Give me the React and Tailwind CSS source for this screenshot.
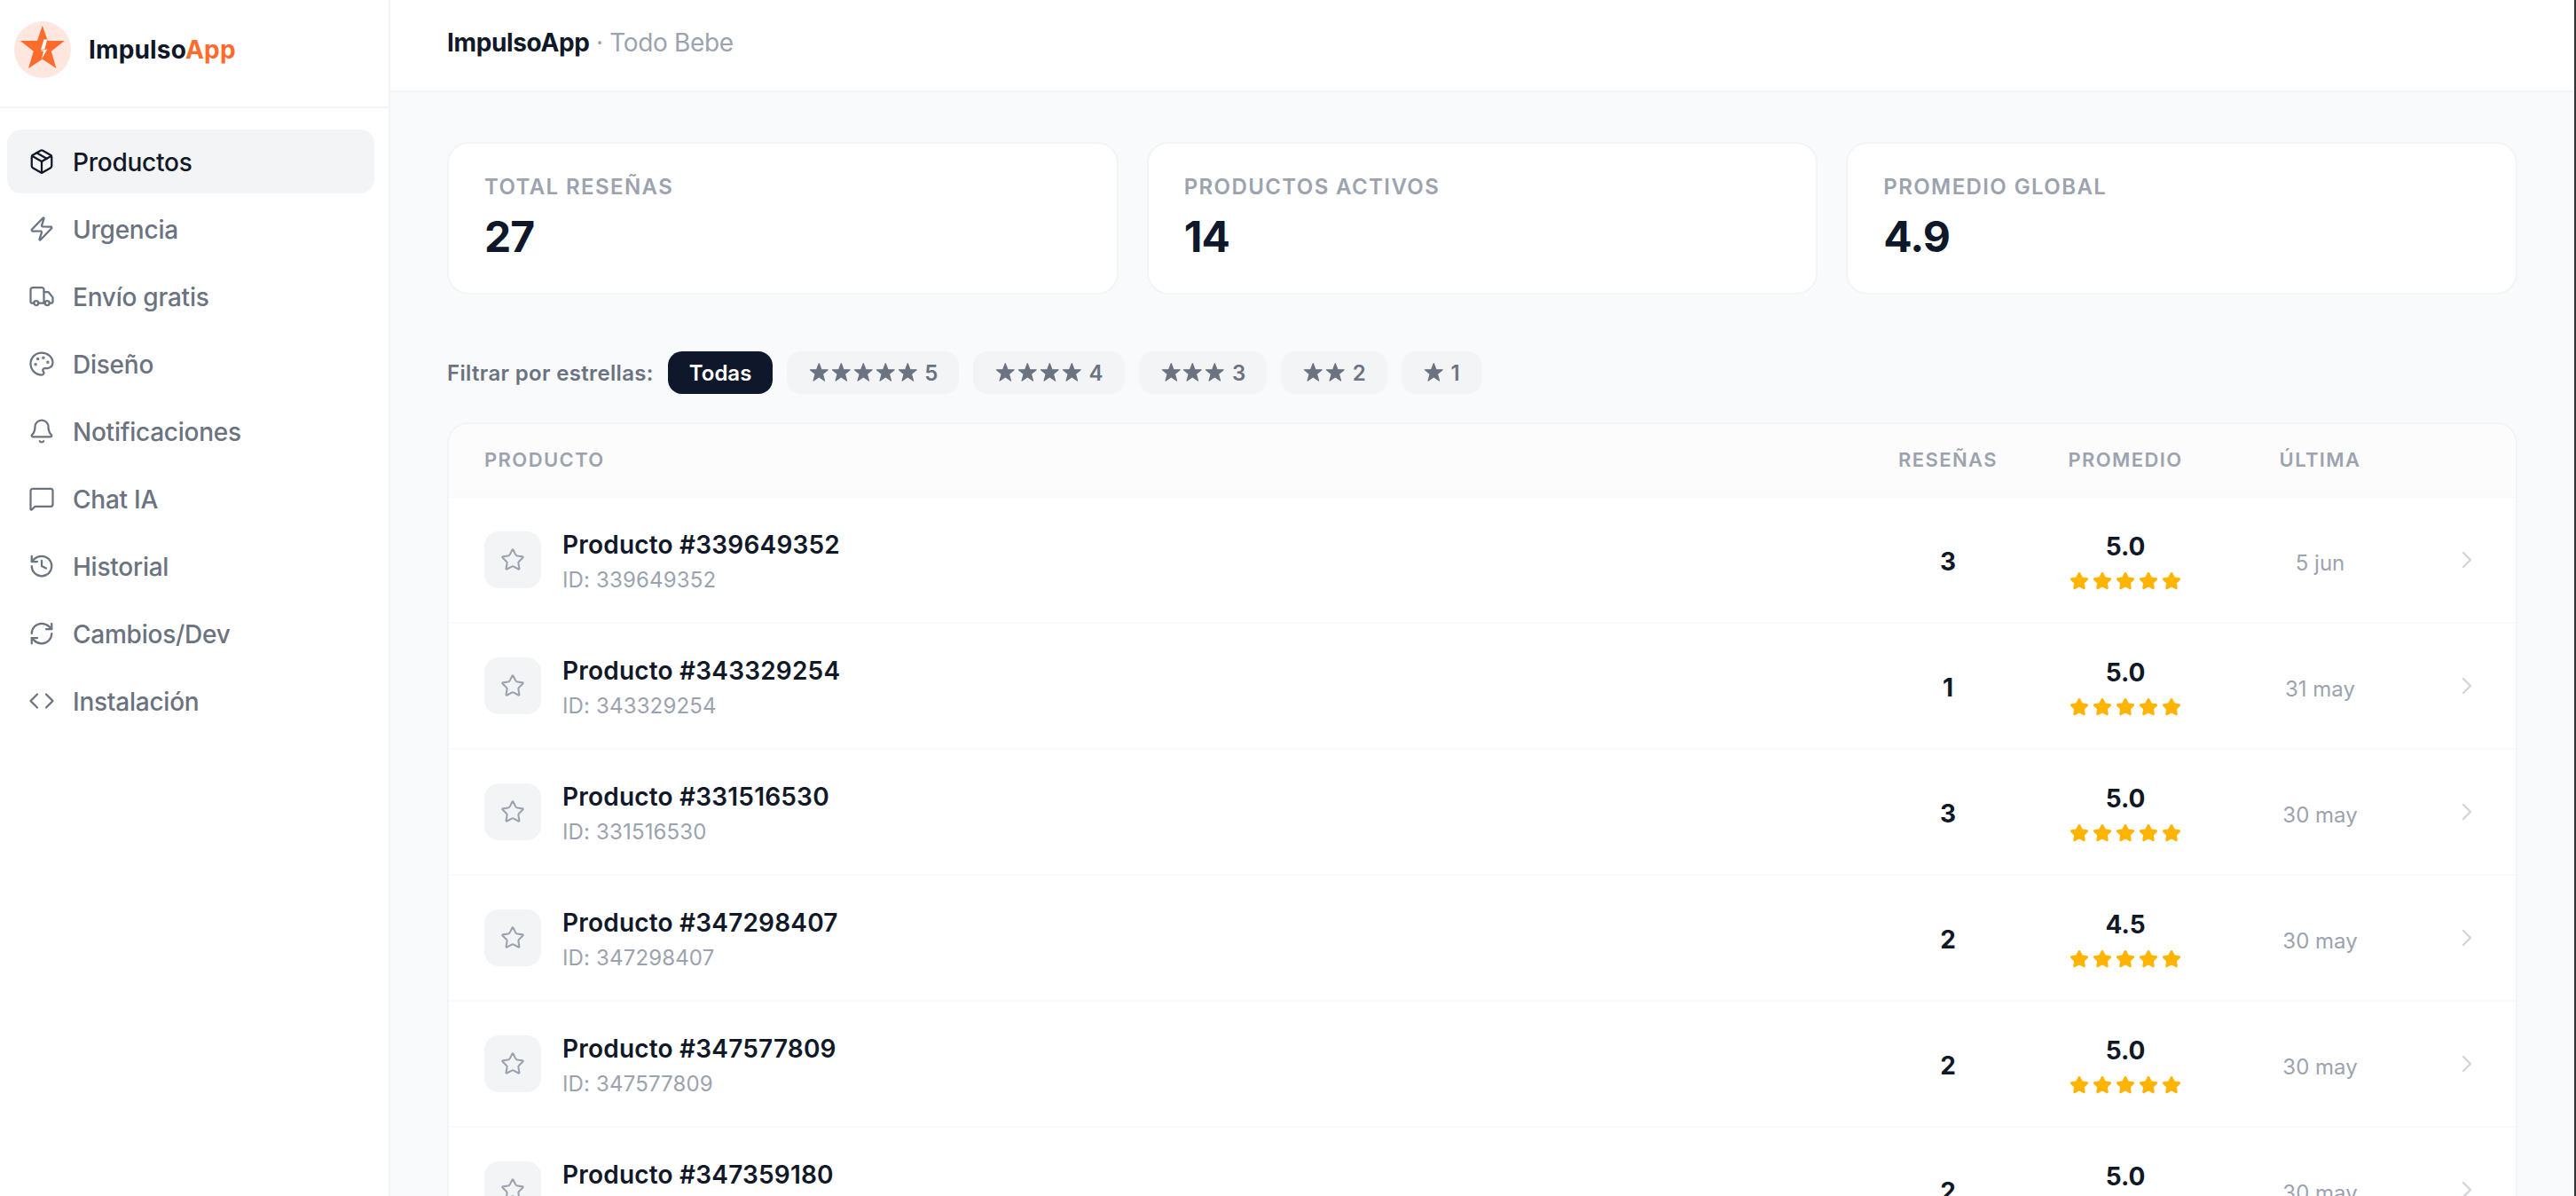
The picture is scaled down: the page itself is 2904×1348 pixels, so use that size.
import React from 'react';
import {
  Bell,
  ChevronRight,
  Code,
  History,
  MessageSquare,
  Package,
  Palette,
  RefreshCw,
  Star,
  Truck,
  Zap,
} from 'lucide-react';

const NAV = [
  { label: 'Productos', icon: Package, active: true },
  { label: 'Urgencia', icon: Zap },
  { label: 'Envío gratis', icon: Truck },
  { label: 'Diseño', icon: Palette },
  { label: 'Notificaciones', icon: Bell },
  { label: 'Chat IA', icon: MessageSquare },
  { label: 'Historial', icon: History },
  { label: 'Cambios/Dev', icon: RefreshCw },
  { label: 'Instalación', icon: Code },
];

const STATS = [
  { label: 'Total reseñas', value: '27' },
  { label: 'Productos activos', value: '14' },
  { label: 'Promedio global', value: '4.9' },
];

const PRODUCTS = [
  { id: '339649352', count: 3, avg: '5.0', last: '5 jun' },
  { id: '343329254', count: 1, avg: '5.0', last: '31 may' },
  { id: '331516530', count: 3, avg: '5.0', last: '30 may' },
  { id: '347298407', count: 2, avg: '4.5', last: '30 may' },
  { id: '347577809', count: 2, avg: '5.0', last: '30 may' },
  { id: '347359180', count: 2, avg: '5.0', last: '30 may' },
];

const COLS = 'grid grid-cols-[1fr_200px_200px_239px_61px] items-center px-10';

function Logo() {
  return (
    <svg viewBox="0 0 64 64" className="size-16 shrink-0" aria-hidden="true">
      <circle cx="32" cy="32" r="32" fill="#ffe7df" />
      <path
        d="M31.8 4.8 L37.8 22 L56.8 22 L41.8 33.8 L47.4 53 L31.8 42.8 L16 53 L21.8 33.8 L6.8 22 L26 22 Z"
        fill="#ff6b2b"
      />
      <path d="M33.4 20.6 L37.2 20.6 L34.4 31.6 L37.2 31.6 L30.8 43 L33 34.2 L29.8 33 Z" fill="#fff" />
      <path d="M29.4 32.9 L37.6 30.8" stroke="#ff6b2b" strokeWidth="0.8" />
    </svg>
  );
}

function SolidStar() {
  return (
    <svg viewBox="0 0 25 24" className="h-6 w-[24.8px]" aria-hidden="true">
      <path
        d="M12.4 1.6l2.7 7.2h7.3l-5.8 4.8 2.1 7.6-6.3-4.3-6.3 4.3 2.1-7.6-5.8-4.8h7.3z"
        fill="currentColor"
        stroke="currentColor"
        strokeWidth="1.2"
        strokeLinejoin="round"
      />
    </svg>
  );
}

function Sidebar() {
  return (
    <aside className="flex w-[440px] shrink-0 flex-col border-r-2 border-gray-100 bg-white">
      <div className="flex h-[122px] items-start gap-5 border-b-2 border-gray-100 px-4 pt-6">
        <Logo />
        <p className="text-[28px] leading-[65px] font-bold tracking-[0.15px] text-gray-900">
          Impulso<span className="text-[#ff6b2b]">App</span>
        </p>
      </div>
      <nav className="flex flex-col gap-1 pt-6 pr-4 pl-2">
        {NAV.map(({ label, icon: Icon, active }) => (
          <a
            key={label}
            className={[
              'flex h-[72px] items-center gap-5 rounded-2xl pl-6 text-[28px] font-medium tracking-[-0.24px]',
              active ? 'bg-gray-100 text-[#111827]' : 'text-[#6b7280]',
            ].join(' ')}
          >
            <Icon size={30} strokeWidth={1.8} aria-hidden="true" />
            <span className="pt-px">{label}</span>
          </a>
        ))}
      </nav>
    </aside>
  );
}

function StatCard({ label, value }) {
  return (
    <div className="h-[172px] rounded-3xl border-2 border-gray-100 bg-white px-10 pt-[34px]">
      <p className="text-[24px] leading-[30px] font-semibold tracking-[1.4px] text-[#9ca3af] uppercase">{label}</p>
      <p className="mt-3 text-[48px] leading-[58px] font-bold tracking-[-0.9px] text-[#0f172a]">{value}</p>
    </div>
  );
}

function Filters() {
  return (
    <div className="mt-16 flex h-12 items-center gap-4 text-[24px] font-semibold text-[#6b7280]">
      <span className="pt-px tracking-[0.33px]">Filtrar por estrellas:</span>
      <button className="h-12 rounded-2xl bg-[#0f172a] px-6 pt-px text-white">Todas</button>
      {[5, 4, 3, 2, 1].map((n) => (
        <button key={n} className="flex h-12 items-center rounded-2xl bg-gray-100 px-6">
          {Array.from({ length: n }, (_, i) => (
            <SolidStar key={i} />
          ))}
          <span className="ml-[7px] pt-px">{n}</span>
        </button>
      ))}
    </div>
  );
}

function ProductRow({ product }) {
  return (
    <div className={`${COLS} h-[142px] border-b-2 border-gray-50`}>
      <div className="flex items-center gap-6">
        <div className="flex size-16 items-center justify-center rounded-2xl bg-gray-100 text-[#9ca3af]">
          <Star size={28} strokeWidth={1.8} aria-hidden="true" />
        </div>
        <div className="pt-[3px]">
          <p className="text-[28px] leading-[42px] font-semibold tracking-[0.2px] text-[#111827]">
            Producto #{product.id}
          </p>
          <p className="text-[24px] leading-[38px] tracking-[0.15px] text-[#9ca3af]">ID: {product.id}</p>
        </div>
      </div>
      <p className="pt-1 text-center text-[28px] leading-[42px] font-bold text-[#111827]">{product.count}</p>
      <div className="flex flex-col items-center pt-px">
        <p className="text-[28px] leading-[38px] font-bold text-[#111827]">{product.avg}</p>
        <div className="flex gap-1 pt-[9px] text-[#ffb400]">
          {Array.from({ length: 5 }, (_, i) => (
            <Star key={i} size={22} fill="currentColor" aria-hidden="true" />
          ))}
        </div>
      </div>
      <p className="pt-2 text-center text-[24px] leading-9 text-[#9ca3af]">{product.last}</p>
      <ChevronRight size={32} strokeWidth={1.8} className="-mr-px justify-self-end text-[#d1d5db]" aria-hidden="true" />
    </div>
  );
}

export default function App() {
  return (
    <div className="flex h-[1348px] w-[2904px] overflow-hidden border-r-2 border-[#333638] bg-[#f9fafc] font-['Inter',sans-serif]">
      <Sidebar />
      <main className="min-w-0 flex-1">
        <header className="h-[104px] border-b-2 border-gray-100 bg-white px-16 pt-[27px] text-[28px] leading-[42px]">
          <span className="font-bold tracking-[-0.36px] text-[#111827]">ImpulsoApp</span>
          <span className="tracking-[-0.36px] text-[#9ca3af]"> · Todo Bebe</span>
        </header>
        <div className="px-16 pt-14">
          <div className="grid grid-cols-3 gap-8">
            {STATS.map((s) => (
              <StatCard key={s.label} {...s} />
            ))}
          </div>
          <Filters />
          <div className="mt-8 overflow-hidden rounded-3xl border-2 border-gray-100 bg-white">
            <div
              className={`${COLS} h-[83px] border-b-2 border-gray-50 bg-[#fcfcfd] text-center text-[22px] font-semibold tracking-[1.4px] text-[#9ca3af] uppercase`}
            >
              <span className="text-left">Producto</span>
              <span>Reseñas</span>
              <span>Promedio</span>
              <span>Última</span>
            </div>
            {PRODUCTS.map((p) => (
              <ProductRow key={p.id} product={p} />
            ))}
          </div>
        </div>
      </main>
    </div>
  );
}
